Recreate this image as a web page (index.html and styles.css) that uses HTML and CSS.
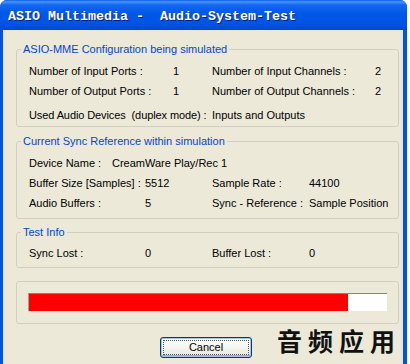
FILE: index.html
```html
<!DOCTYPE html>
<html lang="en">
<head>
    <meta charset="utf-8">
    <title>ASIO Multimedia - Audio-System-Test</title>
    <link rel="stylesheet" href="styles.css">
</head>
<body>

<div class="window">
    <div class="titlebar">
        <span class="title">ASIO Multimedia -  Audio-System-Test</span>
    </div>
    <div class="client">

        <fieldset class="group group-config">
            <legend>ASIO-MME Configuration being simulated</legend>
            <div class="row">
                <span class="lbl">Number of Input Ports :</span>
                <span class="val">1</span>
                <span class="lbl2">Number of Input Channels :</span>
                <span>2</span>
            </div>
            <div class="row">
                <span class="lbl">Number of Output Ports :</span>
                <span class="val">1</span>
                <span class="lbl2">Number of Output Channels :</span>
                <span>2</span>
            </div>
            <div class="row row-sep">
                <span class="lbl-wide">Used Audio Devices  (duplex mode) :</span>
                <span>Inputs and Outputs</span>
            </div>
        </fieldset>

        <fieldset class="group group-sync">
            <legend>Current Sync Reference within simulation</legend>
            <div class="row">
                <span class="lbl-dev">Device Name :</span>
                <span>CreamWare Play/Rec 1</span>
            </div>
            <div class="row">
                <span class="lbl">Buffer Size [Samples] :</span>
                <span class="val">5512</span>
                <span class="lbl2">Sample Rate :</span>
                <span>44100</span>
            </div>
            <div class="row">
                <span class="lbl">Audio Buffers :</span>
                <span class="val">5</span>
                <span class="lbl2">Sync - Reference :</span>
                <span>Sample Position</span>
            </div>
        </fieldset>

        <fieldset class="group group-test">
            <legend>Test Info</legend>
            <div class="row">
                <span class="lbl">Sync Lost :</span>
                <span class="val">0</span>
                <span class="lbl2">Buffer Lost :</span>
                <span>0</span>
            </div>
        </fieldset>

        <div class="progress-box">
            <div class="progress">
                <div class="progress-fill" style="width: 89%"></div>
            </div>
        </div>

        <div class="bottom">
            <button class="btn" type="button"><span>Cancel</span></button>
            <span class="brand">音频应用</span>
        </div>
    </div>
</div>

</body>
</html>
```
FILE: styles.css
```css
body {
    margin: 0;
    background: #fff;
    color: #000;
    font: 11px "Liberation Sans", Arial, sans-serif;
}

.window {
    width: 407px;
    height: 380px;
    border-radius: 7px 7px 0 0;
    background: #0055e5;
    overflow: hidden;
}

.titlebar {
    height: 30px;
    display: flex;
    align-items: center;
    padding-left: 8px;
    background: linear-gradient(to bottom, #0a5ff0 0, #4a94f8 6%, #1468f2 16%, #0058e8 45%, #0054e4 80%, #0048d2 100%);
}

.title {
    white-space: pre;
    color: #fff;
    font: bold 13.33px "Liberation Mono", "Courier New", monospace;
    text-shadow: 1px 1px 0 #0a1e78;
    margin-top: 2px;
}

.client {
    margin: 0 4px 0 3px;
    height: 350px;
    background: #ece9d8;
    padding-top: 1px;
}

.group {
    margin: 12px 4px 0 13px;
    padding: 5px 0 1px 12px;
    border: 1px solid #d0d0bf;
    border-radius: 3px;
    min-width: 0;
}

.group legend {
    margin-left: -8px;
    padding: 0 2px;
    line-height: 13px;
    color: #0046d5;
}

.group-sync {
    margin-top: 8px;
    padding-bottom: 5px;
}

.group-test {
    margin-top: 7px;
    padding-top: 4px;
    padding-bottom: 4px;
}

.row {
    display: flex;
    align-items: center;
    height: 20px;
    white-space: pre;
}

.row-sep {
    margin-top: 4px;
}

.group-config .lbl { width: 144px; }
.group-config .val { width: 39px; }
.group-config .lbl2 { width: 163px; }
.lbl-wide { width: 183px; letter-spacing: -0.1px; }
.lbl-dev { width: 83px; }

.group-sync .lbl,
.group-test .lbl { width: 116px; }
.group-sync .val,
.group-test .val { width: 67px; }
.group-sync .lbl2,
.group-test .lbl2 { width: 97px; }

.progress-box {
    margin: 13px 4px 0 13px;
    padding: 11px 11px 12px;
    border: 1px solid #d0d0bf;
    border-radius: 3px;
}

.progress {
    height: 18px;
    background: #fff;
    border-top: 1px solid #8a8470;
    border-left: 1px solid #a8a290;
    box-sizing: border-box;
    display: flex;
}

.progress-fill {
    background: #ff0000;
}

.bottom {
    display: flex;
    align-items: flex-start;
    margin-top: 3px;
}

.btn {
    flex-shrink: 0;
    margin: 10px 0 0 157px;
    width: 92px;
    height: 21px;
    padding: 2px;
    border: 1px solid #003c74;
    border-radius: 3px;
    background: linear-gradient(to bottom, #fff 0, #f4f4f0 50%, #e6e4dc 100%);
    box-shadow: inset 0 0 0 1px #a8c4ee, inset 0 -1px 0 1px #89adeb;
    font: 11px "Liberation Sans", Arial, sans-serif;
    color: #000;
}

.btn span {
    display: block;
    height: 100%;
    line-height: 13px;
    border: 1px dotted #555;
    box-sizing: border-box;
}

.brand {
    flex-shrink: 0;
    white-space: nowrap;
    margin-left: 25px;
    font: bold 25px/26px "Noto Sans CJK SC", sans-serif;
    letter-spacing: 6px;
    color: #111;
}
```
